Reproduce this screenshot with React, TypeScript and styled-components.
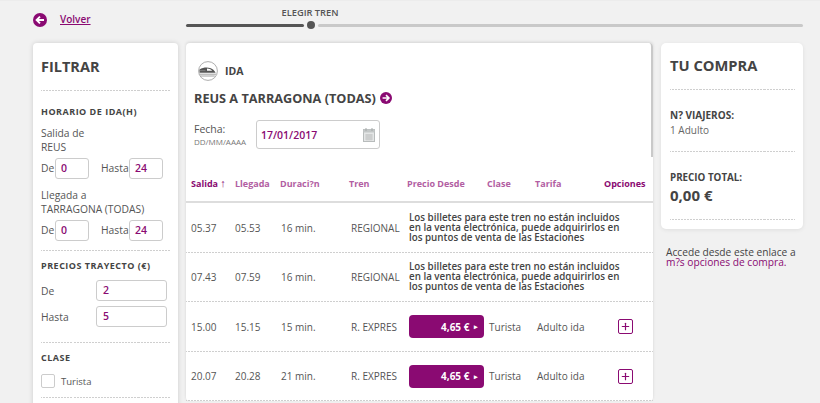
import React from 'react';
import styled, { createGlobalStyle } from 'styled-components';
import { Plus } from 'lucide-react';

const purple = '#8a0a72';
const dots = 'repeating-linear-gradient(90deg, #cfcfcf 0 2px, transparent 2px 3px)';

interface Train {
  salida: string;
  llegada: string;
  duracion: string;
  tren: string;
}

const trains: Train[] = [
  { salida: '05.37', llegada: '05.53', duracion: '16 min.', tren: 'REGIONAL' },
  { salida: '07.43', llegada: '07.59', duracion: '16 min.', tren: 'REGIONAL' },
  { salida: '15.00', llegada: '15.15', duracion: '15 min.', tren: 'R. EXPRES' },
  { salida: '20.07', llegada: '20.28', duracion: '21 min.', tren: 'R. EXPRES' },
];

function ArrowCircle({ left, size }: { left?: boolean; size: number }) {
  return (
    <svg width={size} height={size} viewBox="0 0 14 14" style={{ flex: 'none' }}>
      <circle cx="7" cy="7" r="7" fill={purple} />
      <path
        d={left ? 'M11 7H4M7 3.6 3.6 7 7 10.4' : 'M3 7h7M7 3.6 10.4 7 7 10.4'}
        fill="none"
        stroke="#fff"
        strokeWidth="1.9"
      />
    </svg>
  );
}

function TrainIcon() {
  return (
    <svg width="20" height="20" viewBox="0 0 20 20" style={{ flex: 'none' }}>
      <circle cx="10" cy="10" r="9.4" fill="#fff" stroke="#8a8a8a" strokeWidth="0.7" />
      <path d="M1.5 8.4C5 6.4 9 6 12 7c2.5 .8 4.6 2.4 5.6 4.8H1.5Z" fill="#555" />
      <path d="M9 7.6c2 0 3.8 .8 5.2 2.2H9Z" fill="#fff" />
      <path d="M1.5 9.6h6M1.5 13.2h16.6M2.4 15h14.4" stroke="#888" strokeWidth="0.8" />
    </svg>
  );
}

function CalendarIcon() {
  return (
    <svg width="12" height="14" viewBox="0 0 12 14">
      <rect x="0.5" y="1.5" width="11" height="12" fill="#e4e6e6" stroke="#b8bcbc" />
      <rect x="0.5" y="1.5" width="11" height="3" fill="#c3c7c7" />
      <path d="M3 0v3M9 0v3" stroke="#a5a9a9" />
      <path d="M2 7h8M2 9h8M2 11h8M4 6v6.5M6 6v6.5M8 6v6.5" stroke="#b5b9b9" strokeWidth="0.6" />
    </svg>
  );
}

export default function App() {
  return (
    <>
      <GlobalStyle />
      <Page>
        <TopBar>
          <BackLink>
            <ArrowCircle left size={14} />
            <a>Volver</a>
          </BackLink>
          <Progress>
            <StepLabel>ELEGIR TREN</StepLabel>
            <Track>
              <TrackDone />
              <Knob />
              <TrackTodo />
            </Track>
          </Progress>
        </TopBar>

        <Columns>
          <FilterCard>
            <CardTitle>FILTRAR</CardTitle>
            <Section>
              <SectionTitle>HORARIO DE IDA(H)</SectionTitle>
              <StationLabel>
                Salida de
                <br />
                REUS
              </StationLabel>
              <RangeRow>
                <span>De</span>
                <SmallInput>0</SmallInput>
                <HastaLabel>Hasta</HastaLabel>
                <SmallInput>24</SmallInput>
              </RangeRow>
              <StationLabel>
                Llegada a
                <br />
                TARRAGONA (TODAS)
              </StationLabel>
              <RangeRow>
                <span>De</span>
                <SmallInput>0</SmallInput>
                <HastaLabel>Hasta</HastaLabel>
                <SmallInput>24</SmallInput>
              </RangeRow>
            </Section>
            <PriceSection>
              <SectionTitle>PRECIOS TRAYECTO (€)</SectionTitle>
              <PriceRow>
                <span>De</span>
                <WideInput>2</WideInput>
              </PriceRow>
              <PriceRow>
                <span>Hasta</span>
                <WideInput>5</WideInput>
              </PriceRow>
            </PriceSection>
            <ClassSection>
              <SectionTitle>CLASE</SectionTitle>
              <CheckRow>
                <CheckBox />
                <span>Turista</span>
              </CheckRow>
            </ClassSection>
          </FilterCard>

          <MainCard>
            <JourneyHead>
              <IdaRow>
                <TrainIcon />
                <span>IDA</span>
              </IdaRow>
              <RouteTitle>
                REUS A TARRAGONA (TODAS)
                <ArrowCircle size={12} />
              </RouteTitle>
              <DateRow>
                <DateLabel>
                  Fecha:
                  <small>DD/MM/AAAA</small>
                </DateLabel>
                <DateInput>
                  17/01/2017
                  <CalendarIcon />
                </DateInput>
              </DateRow>
            </JourneyHead>

            <HeaderRow>
              <HeaderCell $active>
                Salida <b>↑</b>
              </HeaderCell>
              <HeaderCell>Llegada</HeaderCell>
              <HeaderCell>Duraci?n</HeaderCell>
              <HeaderCell>Tren</HeaderCell>
              <HeaderCell>Precio Desde</HeaderCell>
              <HeaderCell>Clase</HeaderCell>
              <HeaderCell>Tarifa</HeaderCell>
              <HeaderCell $active>Opciones</HeaderCell>
            </HeaderRow>

            {trains.map((t) => (
              <TrainRow key={t.salida}>
                <span>{t.salida}</span>
                <span>{t.llegada}</span>
                <InsetCell $inset={1}>{t.duracion}</InsetCell>
                <InsetCell $inset={2}>{t.tren}</InsetCell>
                {t.tren === 'REGIONAL' ? (
                  <Notice>
                    Los billetes para este tren no están incluidos en la venta electrónica, puede adquirirlos en los
                    puntos de venta de las Estaciones
                  </Notice>
                ) : (
                  <>
                    <PriceButton>
                      4,65 € <i>▸</i>
                    </PriceButton>
                    <InsetCell $inset={2}>Turista</InsetCell>
                    <InsetCell $inset={2}>Adulto ida</InsetCell>
                    <PlusBox>
                      <Plus size={11} strokeWidth={2.6} />
                    </PlusBox>
                  </>
                )}
              </TrainRow>
            ))}
          </MainCard>

          <Aside>
            <PurchaseCard>
              <PurchaseTitle>TU COMPRA</PurchaseTitle>
              <TravellersBlock>
                <strong>N? VIAJEROS:</strong>
                <span>1 Adulto</span>
              </TravellersBlock>
              <TotalBlock>
                <strong>PRECIO TOTAL:</strong>
                <Total>0,00 €</Total>
              </TotalBlock>
            </PurchaseCard>
            <MoreOptions>
              Accede desde este enlace a <a>m?s opciones de compra.</a>
            </MoreOptions>
          </Aside>
        </Columns>
      </Page>
    </>
  );
}

const GlobalStyle = createGlobalStyle`
  html, body {
    margin: 0;
    height: 403px;
    overflow: hidden;
    background: #f1f1f1;
    font-family: "Open Sans", "Liberation Sans", sans-serif;
    color: #444;
  }
`;

const Page = styled.div`
  width: 820px;
  height: 403px;
  overflow: hidden;
  padding: 0 17px 0 33px;
  box-sizing: border-box;
  border-top: 1px solid #ececec;
`;

const TopBar = styled.div`
  display: flex;
  height: 42px;
`;

const BackLink = styled.div`
  width: 153px;
  display: flex;
  align-items: center;
  gap: 13px;
  height: 38px;
  font-size: 10px;
  font-weight: 600;

  a {
    color: ${purple};
    text-decoration: underline;
    margin-top: -2px;
  }
`;

const Progress = styled.div`
  flex: 1;
  padding-top: 6px;
`;

const StepLabel = styled.div`
  width: 248px;
  text-align: center;
  font-size: 9.3px;
  line-height: 12px;
  font-weight: 600;
  color: #555;
`;

const Track = styled.div`
  display: flex;
  align-items: center;
  margin-top: 2px;
`;

const TrackDone = styled.div`
  width: 118px;
  height: 3px;
  border-radius: 2px;
  background: #555;
`;

const Knob = styled.div`
  width: 8px;
  height: 8px;
  border-radius: 50%;
  background: #555;
  margin: 0 3px;
`;

const TrackTodo = styled.div`
  flex: 1;
  height: 3px;
  border-radius: 2px;
  background: #c9c9c9;
`;

const Columns = styled.div`
  display: flex;
  align-items: flex-start;
  gap: 8px;
`;

const FilterCard = styled.div`
  width: 145px;
  flex: none;
  box-sizing: border-box;
  height: 400px;
  padding: 0 8px;
  background: #fff;
  border-radius: 4px;
  box-shadow: 0 0 5px rgba(0, 0, 0, 0.15);
`;

const CardTitle = styled.h2`
  margin: 0;
  padding: 12px 0;
  height: 23px;
  line-height: 23px;
  font-size: 14.5px;
  font-weight: 700;
  color: #444;
  border-bottom: 1px solid transparent;
  border-image: ${dots} 1;
`;

const Section = styled.div`
  padding: 14px 0 0;
  border-bottom: 1px solid transparent;
  border-image: ${dots} 1;
  font-size: 10.3px;
`;

const PriceSection = styled(Section)`
  padding: 8px 0 10px;
`;

const ClassSection = styled(Section)`
  padding: 8px 0 9px;
`;

const SectionTitle = styled.h3`
  margin: 0 0 7px;
  font-size: 9px;
  line-height: 14px;
  font-weight: 700;
  letter-spacing: 0.5px;
  color: #444;
`;

const StationLabel = styled.div`
  line-height: 14px;
  color: #555;
`;

const RangeRow = styled.div`
  display: grid;
  grid-template-columns: 14px 34px 40px 34px;
  align-items: center;
  height: 22px;
  margin: 3px 0 9px;
  color: #555;
`;

const HastaLabel = styled.span`
  padding-left: 12px;
`;

const SmallInput = styled.div`
  height: 21px;
  box-sizing: border-box;
  padding-left: 5px;
  line-height: 19px;
  border: 1px solid #ccc;
  border-radius: 3px;
  color: ${purple};
  font-weight: 600;
  font-size: 10.5px;
`;

const PriceRow = styled.div`
  display: grid;
  grid-template-columns: 55px 71px;
  align-items: center;
  margin-bottom: 5px;
  color: #555;
`;

const WideInput = styled(SmallInput)`
  padding-left: 6px;
`;

const CheckRow = styled.div`
  display: flex;
  align-items: center;
  gap: 6px;
  margin-top: 9px;
  height: 14px;
  font-size: 9.5px;
  color: #555;
`;

const CheckBox = styled.div`
  width: 12px;
  height: 12px;
  border: 1px solid #ccc;
  border-radius: 2px;
`;

const MainCard = styled.div`
  width: 467px;
  flex: none;
  background: #fff;
  border-radius: 4px;
  box-shadow: 0 -1px 3px rgba(0, 0, 0, 0.12);
`;

const JourneyHead = styled.div`
  height: 114px;
  padding: 18px 0 0 8px;
  box-sizing: border-box;
  border-right: 2px solid #c9c9c9;
  border-top-right-radius: 4px;
`;

const IdaRow = styled.div`
  display: flex;
  align-items: center;
  gap: 7px;
  padding-left: 4px;
  height: 20px;
  font-size: 10.5px;
  font-weight: 700;
`;

const RouteTitle = styled.div`
  display: flex;
  align-items: center;
  gap: 4px;
  margin-top: 8px;
  height: 18px;
  font-size: 12.7px;
  font-weight: 700;
`;

const DateRow = styled.div`
  display: flex;
  align-items: center;
  gap: 10px;
  margin-top: 13px;
`;

const DateLabel = styled.div`
  width: 52px;
  font-size: 10.5px;
  line-height: 13px;
  color: #555;

  small {
    display: block;
    font-size: 8px;
    line-height: 11px;
    color: #777;
  }
`;

const DateInput = styled.div`
  width: 124px;
  height: 29px;
  box-sizing: border-box;
  padding: 0 4px;
  display: flex;
  align-items: center;
  justify-content: space-between;
  border: 1px solid #ccc;
  border-radius: 3px;
  font-size: 10.5px;
  font-weight: 600;
  color: ${purple};
`;

const rowGrid = `
  display: grid;
  grid-template-columns: 44px 45px 69px 58px 80px 48px 69px 1fr;
  align-items: center;
  padding-left: 5px;
`;

const HeaderRow = styled.div`
  ${rowGrid}
  height: 46px;
  padding-top: 8px;
  box-sizing: border-box;
  border-bottom: 2px solid #ddd;
`;

const HeaderCell = styled.span<{ $active?: boolean }>`
  font-size: 9px;
  font-weight: 700;
  white-space: nowrap;
  color: ${(p) => (p.$active ? purple : '#b25ea2')};

  b {
    font-size: 11px;
    line-height: 9px;
  }
`;

const TrainRow = styled.div`
  ${rowGrid}
  height: 49.5px;
  padding-top: 1px;
  box-sizing: border-box;
  border-bottom: 1px solid transparent;
  border-image: ${dots} 1;
  font-size: 10px;
  color: #555;

  > span {
    white-space: nowrap;
  }
`;

const InsetCell = styled.span<{ $inset: number }>`
  padding-left: ${(p) => p.$inset}px;
`;

const Notice = styled.div`
  grid-column: 5 / -1;
  padding: 0 20px 0 2px;
  font-size: 9.8px;
  font-weight: 600;
  line-height: 10px;
  color: #444;
`;

const PriceButton = styled.div`
  width: 75px;
  height: 23px;
  margin-left: 2px;
  box-sizing: border-box;
  padding-right: 6px;
  display: flex;
  align-items: center;
  justify-content: flex-end;
  gap: 2px;
  border-radius: 4px;
  background: ${purple};
  color: #fff;
  font-size: 10px;
  font-weight: 700;
  white-space: pre;

  i {
    font-style: normal;
    font-size: 7px;
  }
`;

const PlusBox = styled.div`
  width: 13px;
  height: 13px;
  margin-left: 14px;
  display: flex;
  align-items: center;
  justify-content: center;
  border: 1px solid ${purple};
  border-radius: 2px;
  color: ${purple};
`;

const Aside = styled.div`
  width: 142px;
  flex: none;
`;

const PurchaseCard = styled.div`
  background: #fff;
  border-radius: 5px;
  box-shadow: 0 1px 4px rgba(0, 0, 0, 0.08);
  padding: 0 8px 9px 9px;
`;

const PurchaseTitle = styled.h2`
  margin: 0;
  padding: 11px 0 12px;
  height: 23px;
  line-height: 23px;
  font-size: 14.7px;
  font-weight: 700;
  color: #444;
  border-bottom: 1px solid transparent;
  border-image: ${dots} 1;
`;

const TravellersBlock = styled.div`
  height: 62px;
  box-sizing: border-box;
  padding-top: 18px;
  border-bottom: 1px solid transparent;
  border-image: ${dots} 1;
  font-size: 10px;
  line-height: 15px;

  strong {
    display: block;
    font-weight: 700;
    color: #444;
  }

  span {
    color: #666;
  }
`;

const TotalBlock = styled(TravellersBlock)`
  height: 68px;

  strong {
    font-size: 9.8px;
  }
`;

const Total = styled.div`
  font-size: 15px;
  font-weight: 700;
  line-height: 19px;
  margin-top: 1px;
  color: #444;
`;

const MoreOptions = styled.p`
  margin: 18px 0 0 5px;
  font-size: 10.2px;
  line-height: 10px;
  color: #444;

  a {
    color: ${purple};
    font-weight: 500;
  }
`;
